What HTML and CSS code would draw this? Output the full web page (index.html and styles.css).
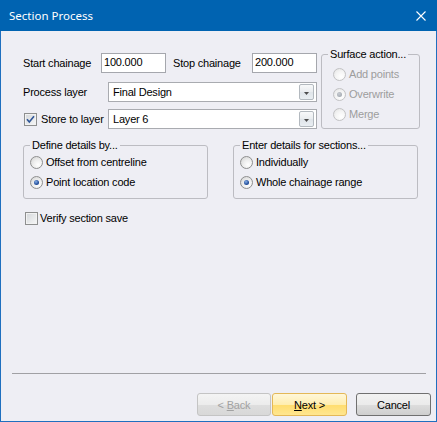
FILE: index.html
```html
<!DOCTYPE html>
<html>
<head>
<meta charset="utf-8">
<title>Section Process</title>
<link rel="stylesheet" href="styles.css">
</head>
<body>
<div class="window">
  <div class="titlebar">
    <span class="title">Section Process</span>
    <svg class="close" width="10" height="10" viewBox="0 0 10 10"><path d="M0.5 0.5L9.5 9.5M9.5 0.5L0.5 9.5" stroke="#ffffff" stroke-width="1.1" fill="none"/></svg>
  </div>
  <div class="client">
    <div class="top">
      <div class="fields">
        <div class="row row1">
          <span class="lbl lbl-start">Start chainage</span>
          <span class="textbox">100.000</span>
          <span class="lbl lbl-stop">Stop chainage</span>
          <span class="textbox">200.000</span>
        </div>
        <div class="row row2">
          <span class="lbl lbl-proc">Process layer</span>
          <span class="combo"><span class="combo-text">Final Design</span><span class="dd"><svg width="5" height="3" viewBox="0 0 5 3"><path d="M0 0H5L2.5 3Z" fill="#4d4d4d"/></svg></span></span>
        </div>
        <div class="row row3">
          <span class="checkwrap">
            <span class="check"><svg width="11" height="11" viewBox="0 0 11 11"><path d="M2 5.2L4.3 8L9 2.2" stroke="#2f5597" stroke-width="1.6" fill="none"/></svg></span>
            <span class="checklbl">Store to layer</span>
          </span>
          <span class="combo"><span class="combo-text">Layer 6</span><span class="dd"><svg width="5" height="3" viewBox="0 0 5 3"><path d="M0 0H5L2.5 3Z" fill="#4d4d4d"/></svg></span></span>
        </div>
      </div>
      <fieldset class="group surface">
        <legend>Surface action...</legend>
        <div class="opt disabled"><span class="radio"></span><span>Add points</span></div>
        <div class="opt disabled"><span class="radio on"></span><span>Overwrite</span></div>
        <div class="opt disabled"><span class="radio"></span><span>Merge</span></div>
      </fieldset>
    </div>
    <div class="groups">
      <fieldset class="group define">
        <legend>Define details by...</legend>
        <div class="opt"><span class="radio"></span><span>Offset from centreline</span></div>
        <div class="opt"><span class="radio on"></span><span>Point location code</span></div>
      </fieldset>
      <fieldset class="group enter">
        <legend>Enter details for sections...</legend>
        <div class="opt"><span class="radio"></span><span>Individually</span></div>
        <div class="opt"><span class="radio on"></span><span>Whole chainage range</span></div>
      </fieldset>
    </div>
    <div class="verify">
      <span class="check"></span>
      <span class="verifylbl">Verify section save</span>
    </div>
    <div class="spacer"></div>
    <div class="separator"></div>
    <div class="buttons">
      <span class="btn btn-back"><span>&lt; <u>B</u>ack</span></span>
      <span class="btn btn-next"><span><u>N</u>ext &gt;</span></span>
      <span class="btn btn-cancel"><span>Cancel</span></span>
    </div>
  </div>
</div>
</body>
</html>
```
FILE: styles.css
```css
html, body {
  margin: 0;
  padding: 0;
}
body {
  width: 437px;
  height: 422px;
  overflow: hidden;
  background: #ffffff;
  font-family: "Liberation Sans", Arial, sans-serif;
  font-size: 11px;
  letter-spacing: -0.2px;
  color: #000000;
}
.window {
  width: 437px;
  height: 422px;
  display: flex;
  flex-direction: column;
}
.titlebar {
  box-sizing: border-box;
  height: 31px;
  flex: none;
  background: #0063b1;
  display: flex;
  align-items: center;
  padding: 0 11px 0 9px;
}
.title {
  flex: 1;
  color: #ffffff;
  font-family: "Noto Sans", "Open Sans", sans-serif;
  font-size: 11.5px;
  letter-spacing: 0;
}
.close {
  display: block;
}
.client {
  flex: 1;
  box-sizing: border-box;
  display: flex;
  flex-direction: column;
  background: #eeeef4;
  border: 1px solid #1f6fbf;
  border-top: none;
}
.top {
  display: flex;
  align-items: flex-start;
  padding-left: 22px;
}
.fields {
  margin-top: 22px;
  width: 294px;
}
.row {
  display: flex;
  align-items: center;
  height: 20px;
}
.row2 { margin-top: 9px; }
.row3 { margin-top: 7px; }
.lbl { flex: none; }
.lbl-start { width: 78px; }
.lbl-stop { width: 79px; margin-left: 7px; }
.lbl-proc { width: 85px; }
.textbox {
  box-sizing: border-box;
  width: 65px;
  height: 20px;
  background: #ffffff;
  border: 1px solid #a5a7ad;
  padding-left: 2px;
  line-height: 17px;
}
.combo {
  box-sizing: border-box;
  width: 209px;
  height: 20px;
  background: #ffffff;
  border: 1px solid #a9abb0;
  display: flex;
  align-items: center;
  padding: 0 2px 0 4px;
}
.combo-text { flex: 1; }
.dd {
  box-sizing: border-box;
  width: 15px;
  height: 16px;
  border: 1px solid #b3b9bf;
  border-radius: 2px;
  background: linear-gradient(#f8f9fa, #e9ecef 50%, #dfe4e9 51%, #e9eef2);
  display: flex;
  align-items: center;
  justify-content: center;
  padding-top: 2px;
}
.dd svg { display: block; }
.checkwrap {
  width: 85px;
  display: flex;
  align-items: center;
  padding-left: 1px;
  box-sizing: border-box;
}
.check {
  box-sizing: border-box;
  width: 13px;
  height: 13px;
  flex: none;
  border: 1px solid #8e8f8f;
  background: linear-gradient(135deg, #d3d6da, #f7f7f7);
  box-shadow: inset 0 0 0 1px #f2f2f2;
  display: flex;
  align-items: center;
  justify-content: center;
}
.check svg { display: block; }
.checklbl { margin-left: 4px; }
.group {
  margin: 0;
  min-width: 0;
  box-sizing: border-box;
  border: 1px solid #bcbcc2;
  border-radius: 3px;
  padding: 0 6px 4px 6px;
}
.group legend {
  padding: 0 2px;
  line-height: 14px;
  font-size: 11px;
}
.surface {
  width: 99px;
  margin-left: 4px;
  margin-top: 16px;
  padding-top: 3px;
}
.surface .opt { margin-left: 5px; }
.opt {
  display: flex;
  align-items: center;
  height: 20px;
  gap: 3px;
}
.opt.disabled { color: #9d9d9d; }
.radio {
  box-sizing: border-box;
  width: 13px;
  height: 13px;
  flex: none;
  border-radius: 50%;
  border: 1px solid #8e8f8f;
  background: radial-gradient(circle at 65% 70%, #ffffff 0, #eeeeee 45%, #cfcfcf 100%);
  display: flex;
  align-items: center;
  justify-content: center;
}
.radio.on::after {
  content: "";
  width: 5px;
  height: 5px;
  border-radius: 50%;
  background: radial-gradient(circle at 40% 35%, #86aee6, #244f9c 60%, #183d80);
}
.disabled .radio {
  border-color: #c2c2c4;
  background: radial-gradient(circle at 65% 70%, #ffffff 0, #f4f4f4 50%, #e0e0e0 100%);
}
.disabled .radio.on::after {
  background: radial-gradient(circle at 40% 35%, #c8ccd2, #9aa0a8);
}
.groups {
  display: flex;
  margin-top: 9px;
  padding-left: 22px;
  gap: 25px;
}
.define, .enter {
  width: 185px;
  padding-bottom: 6px;
}
.verify {
  display: flex;
  align-items: center;
  height: 20px;
  margin-top: 9px;
  padding-left: 24px;
}
.verifylbl { margin-left: 2px; }
.spacer { flex: 1; }
.separator {
  height: 1px;
  background: #a0a0a4;
  margin: 0 10px 0 11px;
}
.buttons {
  display: flex;
  justify-content: flex-end;
  margin-top: 19px;
  margin-bottom: 5px;
  padding-right: 5px;
}
.btn {
  box-sizing: border-box;
  height: 23px;
  width: 75px;
  border-radius: 3px;
  display: flex;
  align-items: center;
  justify-content: center;
  font-size: 11px;
}
.btn-back {
  width: 74px;
  margin-right: 1px;
  color: #a2a2a2;
  border: 1px solid #c4c4c4;
  background: linear-gradient(#f4f4f4, #ececec 50%, #dedede 51%, #d8d8d8);
}
.btn-next {
  border: 1px solid #e4b857;
  background: linear-gradient(#fff7d9, #ffeeb0 50%, #ffdd6e 51%, #ffe690);
}
.btn-cancel {
  margin-left: 9px;
  border: 1px solid #707070;
  background: linear-gradient(#f2f2f2, #ebebeb 50%, #dddddd 51%, #cfcfcf);
}
```
